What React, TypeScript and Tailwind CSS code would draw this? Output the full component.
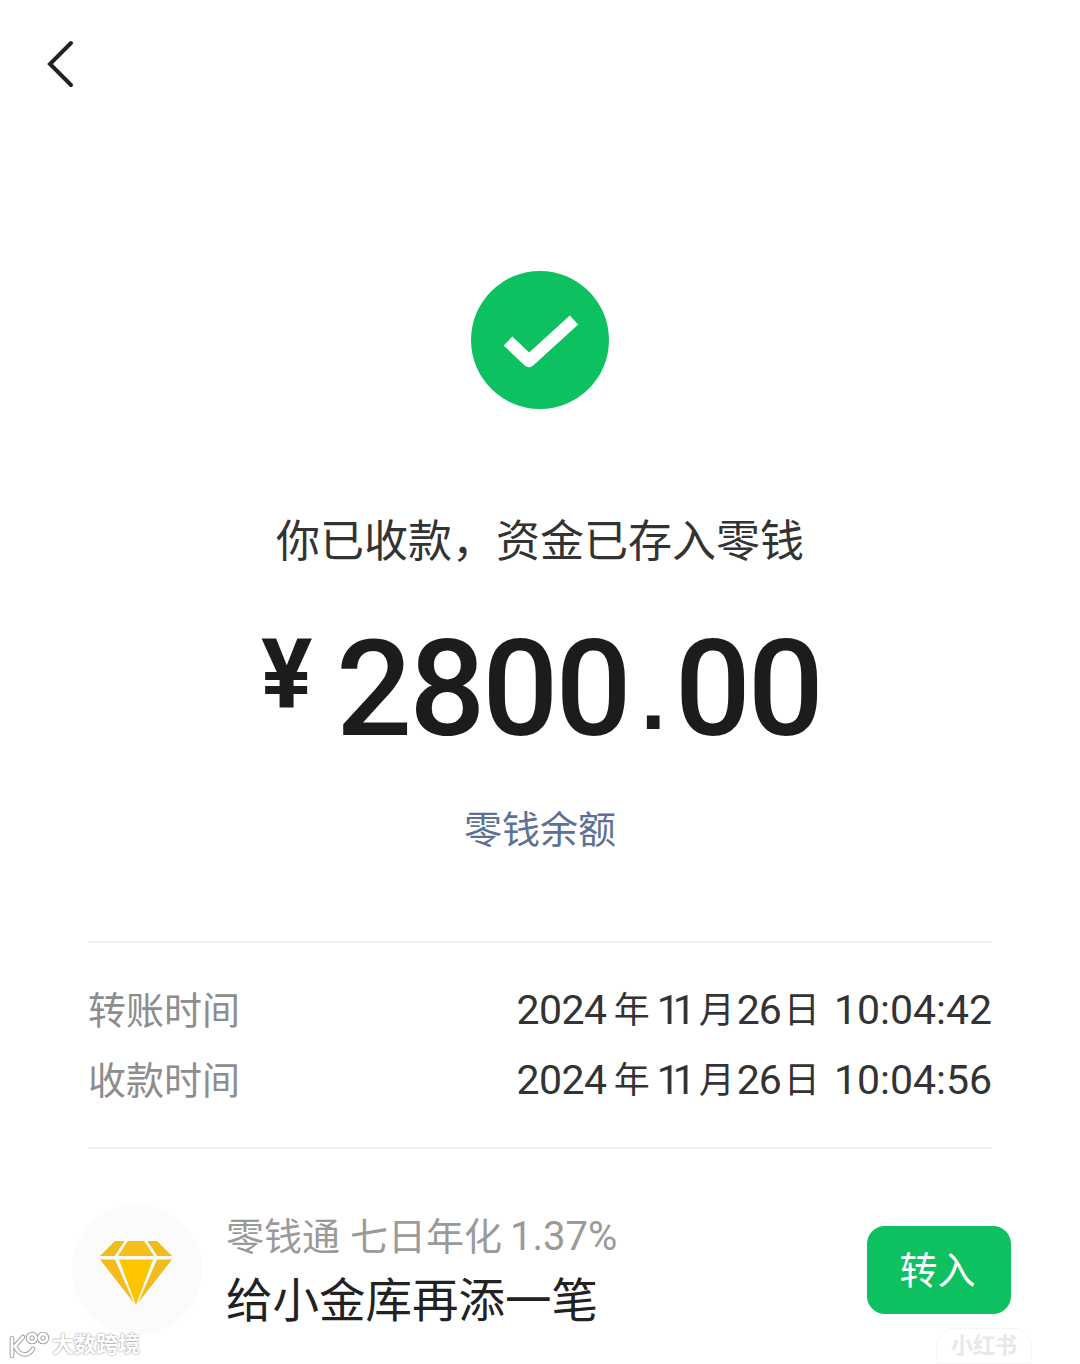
const CJK = 'font-["Roboto","Noto_Sans_CJK_SC",sans-serif]'

const TIMES = [
  { label: '转账时间', value: '10:04:42' },
  { label: '收款时间', value: '10:04:56' },
]

function Diamond() {
  return (
    <svg width="72" height="65" viewBox="0 0 72 65" className="mr-[2px] mt-[7px]">
      <path d="M0 15 L15 0 H24.5 L14.7 15 Z" fill="#f1bb1c" />
      <path d="M18 15 L27.8 0 H44 L54 15 Z" fill="#f5bf18" />
      <path d="M72 15 L57 0 H47.5 L57.3 15 Z" fill="#f1bb1c" />
      <path d="M0 18.5 H15 L34 62 Z" fill="#f3bb1c" />
      <path d="M19 18.5 H53 L36 64 Z" fill="#fdc400" />
      <path d="M72 18.5 H57 L38 62 Z" fill="#f3bb1c" />
    </svg>
  )
}

function K100Logo() {
  return (
    <svg width="42" height="28" viewBox="0 0 42 28" fill="none" strokeLinecap="round">
      <g stroke="#9a9a9a" strokeWidth="4.6">
        <path d="M4 7 V25 M15 6 L7 15 C11 25 20 26 25 18" />
        <circle cx="24" cy="7" r="4" />
        <circle cx="35" cy="7" r="4" />
      </g>
      <g stroke="#fff" strokeWidth="2.8">
        <path d="M4 7 V25 M15 6 L7 15 C11 25 20 26 25 18" />
        <circle cx="24" cy="7" r="4" />
        <circle cx="35" cy="7" r="4" />
      </g>
    </svg>
  )
}

export default function App() {
  return (
    <div className={`relative flex h-[1364px] w-[1080px] flex-col overflow-hidden bg-white ${CJK}`}>
      <div className="ml-[47px] mt-[40px] h-[48px]">
        <svg width="28" height="48" viewBox="0 0 28 48" fill="none">
          <path d="M24 3 L3 24 L24 45" stroke="#222" strokeWidth="4" strokeLinecap="round" strokeLinejoin="miter" />
        </svg>
      </div>

      <div className="mt-[183px] flex justify-center">
        <div className="flex h-[138px] w-[138px] items-center justify-center rounded-full bg-[#0dc160]">
          <svg width="76" height="56" viewBox="0 0 76 56" className="ml-[2px] mt-[3px]">
            <path d="M5 27 L26 47 L71 6" fill="none" stroke="#fff" strokeWidth="12.5" strokeLinejoin="round" />
          </svg>
        </div>
      </div>

      <div className="mt-[101px] text-center text-[44px] leading-[64px] text-[#333]">你已收款，资金已存入零钱</div>

      <div className="mt-[41px] flex h-[187px] items-start pl-[261px] text-[#1c1c1c]">
        <span className="mt-[4px] w-[75px] text-[96px] font-bold leading-[110px]">¥</span>
        <span className="text-[134px] font-medium leading-[150px] tracking-[-3px]">2800</span>
        <span className='ml-[12px] mr-[9px] mt-[8px] font-["Liberation_Sans",sans-serif] text-[90px] font-bold leading-[150px]'>.</span>
        <span className="text-[134px] font-medium leading-[150px] tracking-[-3px]">00</span>
      </div>

      <div className="text-center text-[38px] leading-[56px] text-[#5d7197]">零钱余额</div>

      <div className="mx-[88px] mt-[83px] border-t-2 border-[#f0f0f0] pb-[31px] pt-[33px]">
        {TIMES.map((t) => (
          <div key={t.label} className="flex h-[70px] items-center justify-between text-[38px]">
            <span className="text-[#8d8d8d]">{t.label}</span>
            <span className="flex items-center text-[41px] text-[#333]">
              <span className="tracking-[-0.5px]">2024</span>
              <span className="mx-[7px] text-[36px]">年</span>
              <span className="mr-[7px] tracking-[-7px]">11</span>
              <span className="ml-[3px] mr-[2px] text-[36px]">月</span>
              <span className="tracking-[-1px]">26</span>
              <span className="ml-[3px] mr-[14px] text-[36px]">日</span>
              <span>{t.value}</span>
            </span>
          </div>
        ))}
      </div>

      <div className="mx-[88px] border-t-2 border-[#f0f0f0]" />

      <div className="ml-[72px] mt-[56px] flex items-center">
        <div className="flex h-[130px] w-[130px] items-center justify-center rounded-full bg-[#fbfbfb]">
          <Diamond />
        </div>
        <div className="ml-[24px] w-[641px]">
          <div className="flex items-center pt-[2px] text-[38px] leading-[60px] text-[#9a9a9a]">
            <span>零钱通</span>
            <span className="ml-[10px]">七日年化</span>
            <span className="ml-[8px] text-[40px]">1.37%</span>
          </div>
          <div className="text-[46.5px] leading-[68px] text-[#222]">给小金库再添一笔</div>
        </div>
        <div className="flex h-[88px] w-[144px] items-center justify-center rounded-[18px] bg-[#0dc160] pr-[3px] pt-[2px] text-[38px] text-white">转入</div>
      </div>

      {/* watermarks */}
      <div className="absolute bottom-[4px] left-[8px] flex items-center gap-[2px] text-[22px] font-bold leading-[30px] text-white [text-shadow:0_0_2px_#777]">
        <K100Logo />
        <span>大数跨境</span>
      </div>
      <div className="absolute bottom-0 left-[936px] rounded-t-[18px] border border-[#f6f6f6] px-[14px] text-[22px] font-bold leading-[34px] text-[#e8e8e8]">小红书</div>
    </div>
  )
}
